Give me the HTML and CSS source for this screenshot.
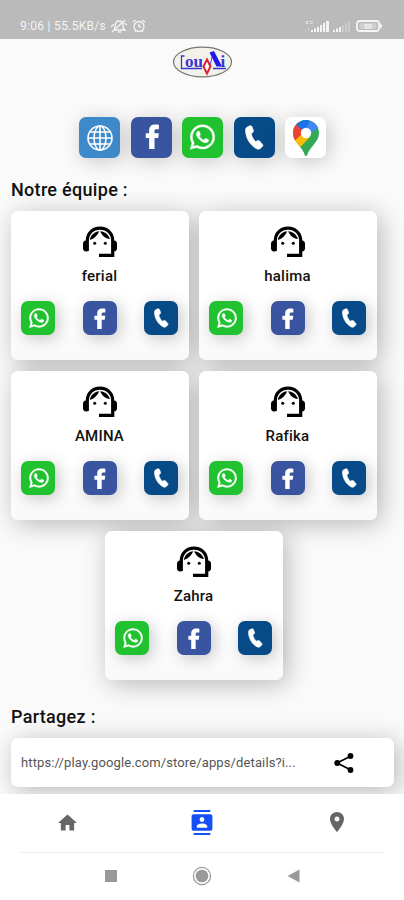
FILE: index.html
```html
<!DOCTYPE html>
<html lang="fr">
<head>
<meta charset="utf-8">
<meta name="viewport" content="width=device-width">
<title>Notre équipe</title>
<link rel="stylesheet" href="styles.css">
</head>
<body>
<svg class="defs" aria-hidden="true">
  <symbol id="whatsapp" viewBox="0 0 448 512"><path fill="#fff" stroke="#fff" stroke-width="8" d="M380.9 97.1C339 55.1 283.2 32 223.9 32c-122.4 0-222 99.6-222 222 0 39.1 10.2 77.3 29.6 111L0 480l117.7-30.9c32.4 17.7 68.9 27 106.1 27h.1c122.3 0 224.1-99.6 224.1-222 0-59.3-25.2-115-67.1-157zm-157 341.6c-33.2 0-65.7-8.9-94-25.7l-6.7-4-69.8 18.3L72 359.2l-4.4-7c-18.5-29.4-28.2-63.3-28.2-98.2 0-101.7 82.8-184.5 184.6-184.5 49.3 0 95.6 19.2 130.4 54.1 34.8 34.9 56.2 81.2 56.1 130.5 0 101.8-84.9 184.6-186.6 184.6zm101.2-138.2c-5.5-2.8-32.8-16.2-37.9-18-5.1-1.9-8.8-2.8-12.5 2.8-3.7 5.6-14.3 18-17.6 21.8-3.2 3.7-6.5 4.2-12 1.4-32.6-16.3-54-29.1-75.5-66-5.7-9.8 5.7-9.1 16.3-30.3 1.8-3.7.9-6.9-.5-9.7-1.4-2.8-12.5-30.1-17.1-41.2-4.5-10.8-9.1-9.3-12.5-9.5-3.2-.2-6.9-.2-10.6-.2-3.7 0-9.7 1.4-14.8 6.9-5.1 5.6-19.4 19-19.4 46.3 0 27.3 19.9 53.7 22.6 57.4 2.8 3.7 39.1 59.7 94.8 83.8 35.2 15.2 49 16.5 66.6 13.9 10.7-1.6 32.8-13.4 37.4-26.4 4.6-13 4.6-24.1 3.2-26.4-1.3-2.5-5-3.9-10.5-6.6z"/></symbol>
  <symbol id="facebook" viewBox="0 0 15 26"><path fill="#fff" d="M4 26V14.500H.5V9.500H4V7C4 2.500 6.500.5 10.300.5c1.600 0 3.200.1 3.900.3v4.600h-2.400c-1.700 0-2.200.7-2.200 2v2.100h4.500l-.7 5H9.600V26z"/></symbol>
  <symbol id="phone" viewBox="0 0 20 26"><path fill="#fff" stroke="#fff" stroke-width=".8" d="M2.200 2.100 5 .7c.9-.4 1.800-.1 2.200.8l1.600 4c.3.900 0 1.700-.7 2.200L6.400 8.800c.7 3.200 2.200 6.100 4.700 8.500l2.200-.900c.8-.4 1.600-.2 2.200.5l2.900 3.400c.6.700.5 1.700-.2 2.300l-2.300 1.900c-1 .8-2.300 1-3.500.4C6 21.700 1 14.400.6 5.700.5 4.200 1 2.800 2.200 2.100z"/></symbol>
  <symbol id="agent" viewBox="0 0 34 32"><path d="M4.300 25V15C4.300 7 9.800 2.200 17 2.200S29.700 7 29.700 15v14.300H16" fill="none" stroke="#000" stroke-width="3.200"/><path d="M4.500 14.500v11H3c-2 0-3-1.500-3-3.500v-4c0-2 1-3.500 3-3.500zM29.500 14.500v11H31c2 0 3-1.500 3-3.500v-4c0-2-1-3.500-3-3.500z"/><path d="M16.200 5.200C14.500 9.500 11.300 12.500 6.800 14 7.500 9.500 11.500 5.500 16.200 5.200zM17.200 5.200c1.500 4 5 7.500 9.800 7.800C25.500 8.500 22 5.500 17.200 5.200z"/><circle cx="11.700" cy="17.300" r="1.500"/><circle cx="22.300" cy="17.300" r="1.500"/></symbol>
</svg>

<header class="status">
  <span class="clock">9:06 | 55.5KB/s</span>
  <svg class="mute" viewBox="0 0 18 14" fill="none" stroke="#fff" stroke-width="1.300"><path d="M4 11h11l-2-2.500V6c0-2.500-1.800-4-4-4S5.500 3.500 5.500 6L4 11zM8 13h3M2 13 15 1M1 8l3-3M14 4l3 2"/></svg>
  <svg class="alarm" viewBox="0 0 14 14" fill="none" stroke="#fff" stroke-width="1.300"><circle cx="7" cy="7.500" r="5"/><path d="M7 4.800v3h2M1 3l2.500-2M13 3l-2.500-2M3 13l1-1.500M11 13l-1-1.500"/></svg>
  <span class="spacer"></span>
  <svg class="signal" viewBox="0 0 48 14" fill="#fff"><g opacity=".6"><path d="M2 2h2v3H2zM5 2h4v1H5zM5 4h4v1H5zM1 11h1v1H1zM4 9h1v2H4z"/></g><path d="M7 11h2v2H7zM10 9.500h2V13h-2zM13 8h2v5h-2zM16 6h2v7h-2zM19 4h2v9h-2zM22 2h3v11h-3zM29 11h2v2h-2zM32 9.500h2V13h-2zM35 8h2v5h-2z"/><path opacity=".3" d="M38 6h2v7h-2zM41 4h2v9h-2zM44 2h2v11h-2z"/></svg>
  <svg class="battery" viewBox="0 0 27 12"><rect x="1" y="1" width="22" height="10" rx="2.500" fill="none" stroke="#fff" stroke-width="1.800"/><path fill="#fff" d="M24 3l2.500 3L24 9z"/><rect x="3.500" y="3.200" width="17" height="5.600" fill="#fff" opacity=".4"/><text x="12" y="8.600" text-anchor="middle" class="charge">50</text></svg>
</header>

<main class="content">
  <svg class="logo" viewBox="0 0 61 32">
    <ellipse cx="30.500" cy="16" rx="29" ry="14.800" fill="#f3f2ea" stroke="#77776f" stroke-width="1.200"/>
    <path d="M12.500 10H9.500v12.500H30M41 22.500h13" fill="none" stroke="#3a35cf" stroke-width="1.300"/>
    <text x="13" y="21" class="logo-text">ou</text>
    <path fill="#2118ee" d="m37.500 6.500 4.500-1.500L50 20.500h-5.500z"/>
    <path d="M40 11 38 20" stroke="#2118ee" stroke-width=".8"/>
    <text x="48.500" y="20.500" class="logo-text">i</text>
    <path d="m35 13.500 3.500 7-3.500 7-3.500-7z" fill="#fff" stroke="#dc2333" stroke-width="2"/>
  </svg>

  <nav class="quick">
    <a class="tile web"><svg viewBox="0 0 26 26" fill="none" stroke="#fff" stroke-width="1.600"><circle cx="13" cy="13" r="12"/><ellipse cx="13" cy="13" rx="6" ry="12"/><path d="M13 1v24M1 13h24M3 7h20M3 19h20"/></svg></a>
    <a class="tile fb"><svg><use href="#facebook"/></svg></a>
    <a class="tile wa"><svg><use href="#whatsapp"/></svg></a>
    <a class="tile tel"><svg><use href="#phone"/></svg></a>
    <a class="tile map"><svg viewBox="0 0 26 36"><clipPath id="pin"><path d="M13 0a13 13 0 0 1 13 13c0 4.500-2 7.500-5 11.300-3 3.700-5.500 6.700-6.700 10.500-.4 1.600-2.200 1.600-2.600 0C10.500 31 8 28 5 24.300 2 20.500 0 17.500 0 13A13 13 0 0 1 13 0z"/></clipPath><g clip-path="url(#pin)"><path fill="#34a853" d="M0 0h26v36H0z"/><path fill="#fbbc04" d="M0 12h10l7 5L4.500 30 0 28z"/><path fill="#ea4335" d="M0 0h4l9 10-5 5-6.500 6L0 20z"/><path fill="#1a73e8" d="M3 4.500 9 0h8l-4 13z"/><path fill="#4285f4" d="m10 12 9-13h7v8L13 17z"/></g><circle cx="13" cy="13" r="5.200" fill="#fff"/></svg></a>
  </nav>

  <h2 class="title">Notre équipe :</h2>
  <section class="team">
    <article class="card"><svg class="agent"><use href="#agent"/></svg><h3>ferial</h3><div class="actions"><a class="tile wa"><svg><use href="#whatsapp"/></svg></a><a class="tile fb"><svg><use href="#facebook"/></svg></a><a class="tile tel"><svg><use href="#phone"/></svg></a></div></article>
    <article class="card"><svg class="agent"><use href="#agent"/></svg><h3>halima</h3><div class="actions"><a class="tile wa"><svg><use href="#whatsapp"/></svg></a><a class="tile fb"><svg><use href="#facebook"/></svg></a><a class="tile tel"><svg><use href="#phone"/></svg></a></div></article>
    <article class="card"><svg class="agent"><use href="#agent"/></svg><h3>AMINA</h3><div class="actions"><a class="tile wa"><svg><use href="#whatsapp"/></svg></a><a class="tile fb"><svg><use href="#facebook"/></svg></a><a class="tile tel"><svg><use href="#phone"/></svg></a></div></article>
    <article class="card"><svg class="agent"><use href="#agent"/></svg><h3>Rafika</h3><div class="actions"><a class="tile wa"><svg><use href="#whatsapp"/></svg></a><a class="tile fb"><svg><use href="#facebook"/></svg></a><a class="tile tel"><svg><use href="#phone"/></svg></a></div></article>
    <article class="card"><svg class="agent"><use href="#agent"/></svg><h3>Zahra</h3><div class="actions"><a class="tile wa"><svg><use href="#whatsapp"/></svg></a><a class="tile fb"><svg><use href="#facebook"/></svg></a><a class="tile tel"><svg><use href="#phone"/></svg></a></div></article>
  </section>

  <h2 class="title share-title">Partagez :</h2>
  <section class="share">
    <span>https://play.google.com/store/apps/details?i...</span>
    <svg viewBox="0 0 20 20"><path d="M17 3 3 10l14 7" fill="none" stroke="#000" stroke-width="1.700"/><circle cx="16.500" cy="3" r="2.900"/><circle cx="3.300" cy="10" r="3"/><circle cx="16.500" cy="17" r="2.900"/></svg>
  </section>
</main>

<nav class="tabs">
  <a><svg class="home" viewBox="2 3 20 17" fill="#666"><path d="M10 20v-6h4v6h5v-8h3L12 3 2 12h3v8z"/></svg></a>
  <a><svg class="contacts" viewBox="2 0 20 24" fill="#1450f5"><path d="M20 0H4v2h16V0zM4 24h16v-2H4v2zM20 4H4c-1.100 0-2 .9-2 2v12c0 1.100.9 2 2 2h16c1.100 0 2-.9 2-2V6c0-1.100-.9-2-2-2zm-8 2.750c1.240 0 2.250 1.010 2.250 2.250s-1.010 2.250-2.250 2.250S9.750 10.240 9.750 9 10.760 6.750 12 6.750zM17 17H7v-1.500c0-1.670 3.330-2.500 5-2.500s5 .83 5 2.500V17z"/></svg></a>
  <a><svg class="place" viewBox="5 2 14 20" fill="#666"><path d="M12 2C8.130 2 5 5.130 5 9c0 5.250 7 13 7 13s7-7.750 7-13c0-3.870-3.130-7-7-7zm0 9.500c-1.380 0-2.500-1.120-2.500-2.500s1.120-2.500 2.500-2.500 2.500 1.120 2.500 2.500-1.120 2.500-2.500 2.500z"/></svg></a>
</nav>
<footer class="system">
  <svg viewBox="0 0 20 20" fill="#999"><path d="M4 4h12v12H4z"/></svg>
  <svg viewBox="0 0 20 20"><circle cx="10" cy="10" r="8.600" fill="none" stroke="#999" stroke-width="1.200"/><circle cx="10" cy="10" r="6.300" fill="#999"/></svg>
  <svg viewBox="0 0 20 20" fill="#999"><path d="M15.500 3.500v13L3.500 10z"/></svg>
</footer>
</body>
</html>
```
FILE: styles.css
```css
* { box-sizing: border-box; }
body {
  margin: 0;
  width: 404px;
  height: 900px;
  overflow: hidden;
  display: flex;
  flex-direction: column;
  background: #fafafa;
  color: #111;
  font-family: Roboto, "Liberation Sans", sans-serif;
}
svg { display: block; }
.defs { position: absolute; width: 0; height: 0; }

.status {
  height: 39px;
  flex: none;
  display: flex;
  align-items: center;
  padding: 12px 21px 0 20px;
  background: #bababa;
  color: #f4f4f4;
}
.status svg { opacity: 0.85; }
.clock { font-size: 12px; letter-spacing: 0.3px; width: 90px; white-space: nowrap; }
.mute { width: 18px; height: 14px; }
.alarm { width: 14px; height: 14px; margin-left: 4px; }
.spacer { flex: 1; }
.signal { width: 48px; height: 14px; margin-right: 4px; }
.battery { width: 27px; height: 12px; }
.charge { font-size: 7px; font-weight: 700; fill: #fff; }

.content { height: 755px; flex: none; padding: 7px 10px 0 11px; overflow: hidden; }
.logo { width: 61px; height: 32px; margin: 0 auto; }
.logo-text { font: 700 17px "Liberation Serif", serif; fill: #3a35cf; }

.quick { display: flex; justify-content: center; gap: 10.5px; margin-top: 39px; }
.tile {
  width: 34px;
  height: 34px;
  border-radius: 7px;
  display: flex;
  align-items: center;
  justify-content: center;
  box-shadow: 3px 3px 16px rgba(0, 0, 0, 0.22);
}
.quick .tile { width: 41px; height: 41px; box-shadow: 3px 3px 20px rgba(0, 0, 0, 0.2); }
.web { background: #3d89ca; }
.fb { background: #39559f; }
.wa { background: #20c22f; }
.tel { background: #064a87; }
.quick .map { background: #fff; }
.web svg { width: 26px; height: 26px; }
.fb svg { width: 12px; height: 21px; margin-left: 1px; }
.wa svg { width: 20px; height: 22px; margin-left: 1px; }
.tel svg { width: 15px; height: 20px; }
.quick .fb svg { width: 15px; height: 25px; margin: 0 0 2px 3px; }
.quick .wa svg { width: 25px; height: 28px; margin: 0 0 1px; }
.quick .tel svg { width: 19px; height: 25px; }
.map svg { width: 26px; height: 36px; }

.title { margin: 20px 0 0; height: 24px; font-size: 18px; line-height: 24px; font-weight: 500; letter-spacing: 0.3px; }
.team {
  width: 366px;
  margin-top: 9px;
  display: flex;
  flex-wrap: wrap;
  justify-content: center;
  gap: 11px 10px;
  position: relative;
  z-index: 0;
}
.card {
  position: relative;
  width: 178px;
  height: 149px;
  padding: 15px 11px 0 10px;
  border-radius: 7px;
  background: linear-gradient(#fff 60%, #f9f9f9);
}
.card::before {
  content: "";
  position: absolute;
  inset: 0;
  z-index: -1;
  border-radius: 7px;
  box-shadow: 4px 4px 26px rgba(0, 0, 0, 0.27);
}
.agent { width: 34px; height: 32px; margin: 0 auto; }
.card h3 { margin: 8px 0 0; font-size: 15px; line-height: 20px; font-weight: 500; letter-spacing: 0.2px; text-align: center; }
.actions { display: flex; justify-content: space-between; margin-top: 15px; }

.share-title { margin-top: 25px; }
.share {
  height: 49px;
  margin-top: 9px;
  display: flex;
  align-items: center;
  padding: 0 40px 0 10px;
  border-radius: 7px;
  background: #fff;
  box-shadow: 4px 4px 26px rgba(0, 0, 0, 0.27);
}
.share span { flex: 1; font-size: 13px; letter-spacing: 0.12px; color: #555; white-space: nowrap; }
.share svg { width: 20px; height: 20px; }

.tabs {
  height: 59px;
  flex: none;
  margin: 0;
  padding-bottom: 3px;
  display: grid;
  grid-template-columns: repeat(3, 1fr);
  align-items: center;
  justify-items: center;
  background: linear-gradient(#eee, #eee) center bottom / 364px 1px no-repeat #fff;
}
.home { width: 19px; height: 17px; }
.contacts { width: 22px; height: 25px; }
.place { width: 14px; height: 20px; }
.system { height: 47px; display: flex; justify-content: center; gap: 71.5px; padding-top: 13px; background: #fff; }
.system svg { width: 20px; height: 20px; }
```
